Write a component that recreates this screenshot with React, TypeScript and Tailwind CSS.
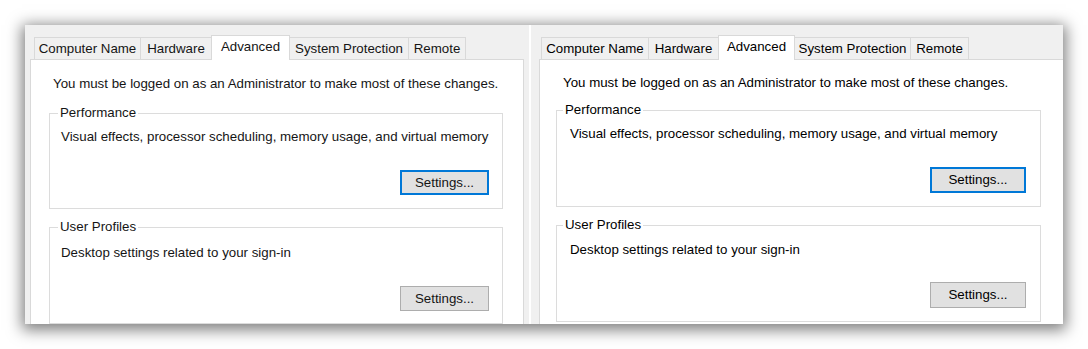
import React from 'react';

const tabsLeft = [
  { label: 'Computer Name', w: 'w-[107px]' },
  { label: 'Hardware', w: 'w-[72px]' },
  { label: 'Advanced', w: 'w-[79px]', active: true },
  { label: 'System Protection', w: 'w-[120px]' },
  { label: 'Remote', w: 'w-[58px]' },
];

const tabsRight = [
  { label: 'Computer Name', w: 'w-[108px]' },
  { label: 'Hardware', w: 'w-[71px]' },
  { label: 'Advanced', w: 'w-[77px]', active: true },
  { label: 'System Protection', w: 'w-[117px]' },
  { label: 'Remote', w: 'w-[59px]' },
];

type Tab = { label: string; w: string; active?: boolean };

function Tabs({ tabs, className }: { tabs: Tab[]; className: string }) {
  return (
    <div className={`relative z-10 flex items-end -mb-px ${className}`}>
      {tabs.map((t) =>
        t.active ? (
          <div
            key={t.label}
            className={`${t.w} h-[25px] -ml-px whitespace-nowrap border border-b-0 border-[#d9d9d9] bg-white text-center leading-[22px]`}
          >
            {t.label}
          </div>
        ) : (
          <div
            key={t.label}
            className={`${t.w} h-[23px] -ml-px first:ml-0 whitespace-nowrap border border-[#d9d9d9] bg-[#f0f0f0] text-center leading-[22px]`}
          >
            {t.label}
          </div>
        )
      )}
    </div>
  );
}

function SettingsButton({ focused, className }: { focused?: boolean; className: string }) {
  return (
    <button
      className={`self-end bg-[#e1e1e1] leading-none ${
        focused ? 'border-2 border-[#0078d7]' : 'border border-[#adadad]'
      } ${className}`}
    >
      Settings...
    </button>
  );
}

function LeftPanel() {
  return (
    <div className="flex w-[504px] flex-col bg-[#f0f0f0] pl-[5px] pr-[5px] pt-[10px] text-[13.3px] leading-[16px] text-[#151515]">
      <Tabs tabs={tabsLeft} className="pl-[4px]" />
      <div className="flex-1 border border-b-0 border-[#d9d9d9] bg-white pl-[22px] pt-[16px]">
        <p>You must be logged on as an Administrator to make most of these changes.</p>
        <fieldset className="-ml-[4px] mt-[13px] flex w-[454px] flex-col border border-[#dcdcdc] pb-[13px] pl-[11px] pr-[13px]">
          <legend className="-ml-[3px] px-[2px]">Performance</legend>
          <p className="mt-[8px]">Visual effects, processor scheduling, memory usage, and virtual memory</p>
          <SettingsButton focused className="mt-[25px] h-[25px] w-[89px]" />
        </fieldset>
        <fieldset className="-ml-[4px] mt-[10px] flex w-[454px] flex-col border border-[#dcdcdc] pb-[12px] pl-[11px] pr-[13px]">
          <legend className="-ml-[3px] px-[2px]">User Profiles</legend>
          <p className="mt-[10px]">Desktop settings related to your sign-in</p>
          <SettingsButton className="mt-[25px] h-[25px] w-[89px]" />
        </fieldset>
      </div>
    </div>
  );
}

function RightPanel() {
  return (
    <div className="flex w-[532px] flex-col bg-[#f0f0f0] pl-[8px] pt-[10px] text-[13.3px] leading-[16px] text-black">
      <Tabs tabs={tabsRight} className="pl-[2px]" />
      <div className="flex-1 border border-b-0 border-r-0 border-[#d9d9d9] bg-white pl-[23px] pt-[15px]">
        <p>You must be logged on as an Administrator to make most of these changes.</p>
        <fieldset className="-ml-[7px] mt-[11px] flex w-[485px] flex-col border border-[#dcdcdc] pb-[13px] pl-[13px] pr-[14px]">
          <legend className="-ml-[7px] px-[2px]">Performance</legend>
          <p className="mt-[8px]">Visual effects, processor scheduling, memory usage, and virtual memory</p>
          <SettingsButton focused className="mt-[25px] h-[26px] w-[96px]" />
        </fieldset>
        <fieldset className="-ml-[7px] mt-[10px] flex w-[485px] flex-col border border-[#dcdcdc] pb-[13px] pl-[13px] pr-[14px]">
          <legend className="-ml-[7px] px-[2px]">User Profiles</legend>
          <p className="mt-[9px]">Desktop settings related to your sign-in</p>
          <SettingsButton className="mt-[24px] h-[26px] w-[96px]" />
        </fieldset>
      </div>
    </div>
  );
}

export default function App() {
  return (
    <div className="h-[349px] w-[1088px] bg-white pl-[25px] pt-[25px] font-['Liberation_Sans',Arial,sans-serif]">
      <div className="flex h-[299px] w-[1038px] gap-[2px] overflow-hidden bg-white shadow-[0_3px_14px_3px_rgba(0,0,0,0.5)]">
        <LeftPanel />
        <RightPanel />
      </div>
    </div>
  );
}
